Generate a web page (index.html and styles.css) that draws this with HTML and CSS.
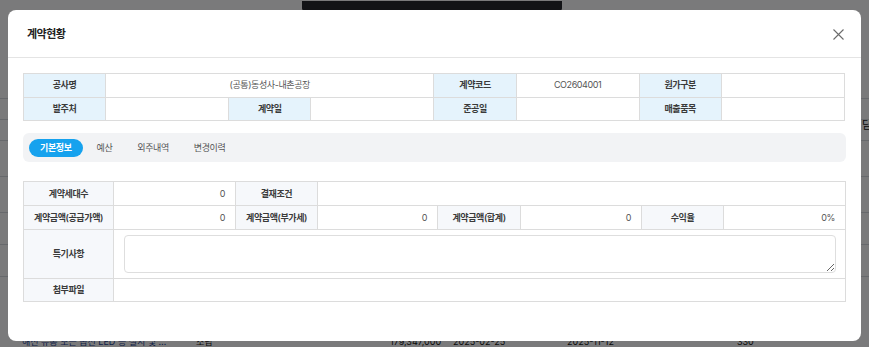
FILE: index.html
```html
<!DOCTYPE html>
<html lang="ko">
<head>
<meta charset="utf-8">
<link rel="stylesheet" href="styles.css">
</head>
<body>
<div class="page">
  <div class="bg-top"></div>
  <div class="bg-rows">
    <div class="bg-row"></div>
    <div class="bg-row"><span class="bg-side">담</span></div>
    <div class="bg-row"></div>
    <div class="bg-row"></div>
    <div class="bg-row"></div>
    <div class="bg-row"></div>
    <div class="bg-row"></div>
    <div class="bg-row bg-last">
      <span class="c1">해신 유통 모든 옵션 LED 등 설치 및 설비점검 공사</span>
      <span class="c2">조립</span>
      <span class="c3">179,347,000</span>
      <span class="c4">2025-02-25</span>
      <span class="c5">2025-11-12</span>
      <span class="c6">330</span>
    </div>
  </div>
</div>
<div class="overlay"></div>
<div class="toast"></div>
<div class="modal">
  <div class="modal-header">
    <h2 class="modal-title">계약현황</h2>
    <button class="close" aria-label="닫기">
      <svg width="11" height="11" viewBox="0 0 11 11"><path d="M0.5 0.5 L10.5 10.5 M10.5 0.5 L0.5 10.5" stroke="#6b6b6b" stroke-width="1.1" fill="none"/></svg>
    </button>
  </div>
  <div class="modal-body">
    <table class="info top">
      <colgroup>
        <col class="w10"><col class="w15"><col class="w10"><col class="w15"><col class="w10"><col class="w15"><col class="w10"><col class="w15">
      </colgroup>
      <tr>
        <th>공사명</th><td colspan="3" class="center">(공통)동성사-내촌공장</td>
        <th>계약코드</th><td class="center">CO2604001</td>
        <th>원가구분</th><td></td>
      </tr>
      <tr>
        <th>발주처</th><td></td>
        <th>계약일</th><td></td>
        <th>준공일</th><td></td>
        <th>매출품목</th><td></td>
      </tr>
    </table>

    <div class="tabs">
      <span class="tab active">기본정보</span>
      <span class="tab">예산</span>
      <span class="tab">외주내역</span>
      <span class="tab">변경이력</span>
    </div>

    <table class="info bottom">
      <colgroup>
        <col class="b1"><col class="b2"><col class="b3"><col class="b4"><col class="b5"><col class="b6"><col class="b7"><col class="b8">
      </colgroup>
      <tr>
        <th>계약세대수</th><td class="num">0</td>
        <th>결재조건</th><td colspan="5"></td>
      </tr>
      <tr>
        <th>계약금액(공급가액)</th><td class="num">0</td>
        <th>계약금액(부가세)</th><td class="num">0</td>
        <th>계약금액(합계)</th><td class="num">0</td>
        <th>수익율</th><td class="num">0%</td>
      </tr>
      <tr class="memo-row">
        <th>특기사항</th><td colspan="7" class="memo"><textarea></textarea></td>
      </tr>
      <tr class="last-row">
        <th>첨부파일</th><td colspan="7"></td>
      </tr>
    </table>
  </div>
</div>
</body>
</html>
```

FILE: styles.css
```css
* { box-sizing: border-box; }
html, body { margin: 0; padding: 0; }
body {
  width: 869px;
  height: 347px;
  overflow: hidden;
  position: relative;
  background: #f4f5f7;
  font-family: Inter, "Noto Sans CJK KR", sans-serif;
  color: #333;
}

/* background page (seen through the overlay) */
.page { width: 869px; height: 347px; }
.bg-top { height: 78px; }
.bg-rows { display: flex; flex-direction: column; }
.bg-row {
  height: 21px;
  border-bottom: 1px solid #cfd3d8;
  position: relative;
  font-size: 10px;
}
.bg-row:nth-child(4) { height: 36px; }
.bg-row:nth-child(5) { height: 36px; }
.bg-row:nth-child(6) { height: 32px; }
.bg-row:nth-child(7) { height: 32px; }
.bg-side { position: absolute; left: 862px; top: 19px; color: #111; font-size: 11px; line-height: 14px; }
.bg-last {
  height: 71px;
  border-bottom: none;
  color: #111;
  white-space: nowrap;
}
.bg-last span { position: absolute; bottom: 0; font-size: 9px; line-height: 12px; }
.bg-last .c1 { left: 22px; width: 150px; overflow: hidden; text-overflow: ellipsis; color: #1d3f8f; }
.bg-last .c2 { left: 196px; }
.bg-last .c3 { left: 390px; }
.bg-last .c4 { left: 453px; }
.bg-last .c5 { left: 567px; }
.bg-last .c6 { left: 737px; }

.overlay {
  position: absolute;
  inset: 0;
  background: rgba(0, 0, 0, 0.5);
}
.toast {
  position: absolute;
  left: 302px;
  top: 1px;
  width: 260px;
  height: 10px;
  background: #121316;
  border-radius: 0 0 3px 3px;
}

/* modal */
.modal {
  position: absolute;
  left: 8px;
  top: 10px;
  width: 853px;
  background: #fff;
  border-radius: 8px;
}
.modal-header {
  height: 48px;
  border-bottom: 1px solid #e4e4e4;
  display: flex;
  align-items: center;
  justify-content: space-between;
  padding: 0 17px 0 19px;
}
.modal-title {
  margin: 0;
  font-size: 11px;
  font-weight: 700;
  color: #222;
  letter-spacing: -0.5px;
  padding-bottom: 1px;
}
.close {
  border: 0;
  background: none;
  padding: 0;
  width: 12px;
  height: 12px;
  display: flex;
  align-items: center;
  justify-content: center;
  margin-top: 1px;
}
.modal-body {
  padding: 15px 15px 39px 15px;
}

.info {
  width: 822px;
  border-collapse: collapse;
  table-layout: fixed;
  font-size: 9px;
  letter-spacing: -0.4px;
}
.info th, .info td {
  border: 1px solid #dcdcdc;
  padding: 0 10px;
  height: 24px;
  line-height: 12px;
  white-space: nowrap;
  overflow: hidden;
}
.info th { font-weight: 600; color: #3a3a3a; text-align: center; }
.info td { color: #555; }
.top th { background: #e5f3fc; }
.top th, .top td { height: 23.5px; }
.w10 { width: 10%; }
.w15 { width: 15%; }
.center { text-align: center; }
.num { text-align: right; }

.bottom th { background: #f6f8fb; }
.b1 { width: 90px; } .b2 { width: 122px; } .b3 { width: 82px; } .b4 { width: 120px; }
.b5 { width: 83px; } .b6 { width: 121px; } .b7 { width: 82px; } .b8 { width: 122px; }
.memo-row th, .memo-row td { height: 49px; }
.last-row th, .last-row td { height: 23px; }
.info td.memo { padding: 5px 10px 5px 10px; }
.memo textarea {
  display: block;
  width: 712px;
  height: 38px;
  border: 1px solid #dedede;
  border-radius: 4px;
  resize: vertical;
  margin: 0;
  font: inherit;
}

.tabs {
  margin: 12px 0 19px;
  height: 29px;
  background: #f2f3f5;
  border-radius: 6px;
  display: flex;
  align-items: center;
  gap: 3px;
  padding: 0 6px;
}
.tab {
  height: 18px;
  line-height: 18px;
  padding: 0 11px;
  border-radius: 9px;
  font-size: 9px;
  letter-spacing: -0.4px;
  color: #555;
}
.tab.active {
  background: #16a2ee;
  color: #fff;
  font-weight: 700;
}
```
